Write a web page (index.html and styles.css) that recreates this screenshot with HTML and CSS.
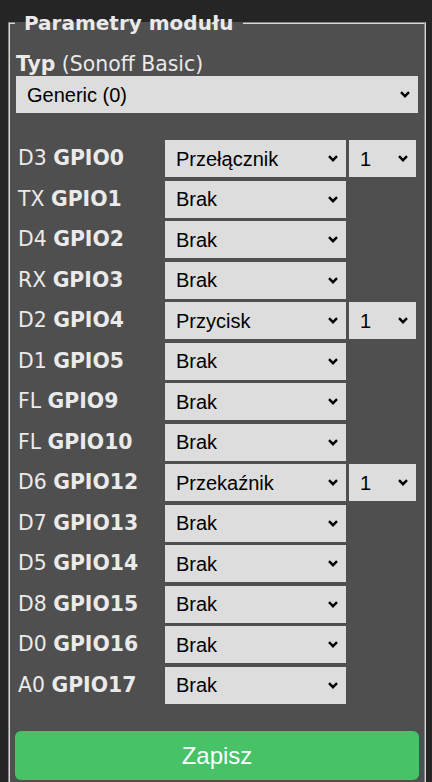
FILE: index.html
```html
<!DOCTYPE html>
<html lang="pl">
<head>
<meta charset="utf-8">
<title>Parametry modułu</title>
<link rel="stylesheet" href="styles.css">
</head>
<body>
<div class="page">
  <fieldset class="panel">
    <legend class="panel-title"><b>&nbsp;Parametry modułu&nbsp;</b></legend>
    <p class="type-label"><b>Typ</b> (Sonoff Basic)</p>
    <span class="sel sel-wide"><select class="field"><option>Generic (0)</option></select><svg class="chev" viewBox="0 0 10 7"><polyline points="1,1.2 5,5.2 9,1.2"/></svg></span>
    <div class="gpio-grid">
      <div class="gpio-label">D3 <b>GPIO0</b></div>
      <span class="sel"><select class="field"><option>Przełącznik</option></select><svg class="chev" viewBox="0 0 10 7"><polyline points="1,1.2 5,5.2 9,1.2"/></svg></span>
      <span class="sel"><select class="field"><option>1</option></select><svg class="chev" viewBox="0 0 10 7"><polyline points="1,1.2 5,5.2 9,1.2"/></svg></span>

      <div class="gpio-label">TX <b>GPIO1</b></div>
      <span class="sel"><select class="field"><option>Brak</option></select><svg class="chev" viewBox="0 0 10 7"><polyline points="1,1.2 5,5.2 9,1.2"/></svg></span>
      <span></span>

      <div class="gpio-label">D4 <b>GPIO2</b></div>
      <span class="sel"><select class="field"><option>Brak</option></select><svg class="chev" viewBox="0 0 10 7"><polyline points="1,1.2 5,5.2 9,1.2"/></svg></span>
      <span></span>

      <div class="gpio-label">RX <b>GPIO3</b></div>
      <span class="sel"><select class="field"><option>Brak</option></select><svg class="chev" viewBox="0 0 10 7"><polyline points="1,1.2 5,5.2 9,1.2"/></svg></span>
      <span></span>

      <div class="gpio-label">D2 <b>GPIO4</b></div>
      <span class="sel"><select class="field"><option>Przycisk</option></select><svg class="chev" viewBox="0 0 10 7"><polyline points="1,1.2 5,5.2 9,1.2"/></svg></span>
      <span class="sel"><select class="field"><option>1</option></select><svg class="chev" viewBox="0 0 10 7"><polyline points="1,1.2 5,5.2 9,1.2"/></svg></span>

      <div class="gpio-label">D1 <b>GPIO5</b></div>
      <span class="sel"><select class="field"><option>Brak</option></select><svg class="chev" viewBox="0 0 10 7"><polyline points="1,1.2 5,5.2 9,1.2"/></svg></span>
      <span></span>

      <div class="gpio-label">FL <b>GPIO9</b></div>
      <span class="sel"><select class="field"><option>Brak</option></select><svg class="chev" viewBox="0 0 10 7"><polyline points="1,1.2 5,5.2 9,1.2"/></svg></span>
      <span></span>

      <div class="gpio-label">FL <b>GPIO10</b></div>
      <span class="sel"><select class="field"><option>Brak</option></select><svg class="chev" viewBox="0 0 10 7"><polyline points="1,1.2 5,5.2 9,1.2"/></svg></span>
      <span></span>

      <div class="gpio-label">D6 <b>GPIO12</b></div>
      <span class="sel"><select class="field"><option>Przekaźnik</option></select><svg class="chev" viewBox="0 0 10 7"><polyline points="1,1.2 5,5.2 9,1.2"/></svg></span>
      <span class="sel"><select class="field"><option>1</option></select><svg class="chev" viewBox="0 0 10 7"><polyline points="1,1.2 5,5.2 9,1.2"/></svg></span>

      <div class="gpio-label">D7 <b>GPIO13</b></div>
      <span class="sel"><select class="field"><option>Brak</option></select><svg class="chev" viewBox="0 0 10 7"><polyline points="1,1.2 5,5.2 9,1.2"/></svg></span>
      <span></span>

      <div class="gpio-label">D5 <b>GPIO14</b></div>
      <span class="sel"><select class="field"><option>Brak</option></select><svg class="chev" viewBox="0 0 10 7"><polyline points="1,1.2 5,5.2 9,1.2"/></svg></span>
      <span></span>

      <div class="gpio-label">D8 <b>GPIO15</b></div>
      <span class="sel"><select class="field"><option>Brak</option></select><svg class="chev" viewBox="0 0 10 7"><polyline points="1,1.2 5,5.2 9,1.2"/></svg></span>
      <span></span>

      <div class="gpio-label">D0 <b>GPIO16</b></div>
      <span class="sel"><select class="field"><option>Brak</option></select><svg class="chev" viewBox="0 0 10 7"><polyline points="1,1.2 5,5.2 9,1.2"/></svg></span>
      <span></span>

      <div class="gpio-label">A0 <b>GPIO17</b></div>
      <span class="sel"><select class="field"><option>Brak</option></select><svg class="chev" viewBox="0 0 10 7"><polyline points="1,1.2 5,5.2 9,1.2"/></svg></span>
      <span></span>
    </div>
    <button class="save-btn" type="button">Zapisz</button>
  </fieldset>
</div>
</body>
</html>
```

FILE: styles.css
```css
html {
  font-size: 20px;
}

body {
  margin: 0;
  background: #252525;
  color: #eaeaea;
  font-family: "DejaVu Sans", Verdana, sans-serif;
  font-size: 20px;
}

.page {
  padding: 11px 6px 0 8px;
}

.panel {
  margin: 0;
  padding: 0 5px 8px 5px;
  background: #4f4f4f;
  border: 2px groove #d8d8d8;
  min-width: 0;
}

.panel-title {
  padding: 0 2px;
  line-height: 24px;
  font-size: 20px;
  color: #eaeaea;
}

.type-label {
  margin: 18px 0 0 1px;
  line-height: 23px;
  font-size: 20.4px;
}

.sel {
  position: relative;
  display: block;
}

.sel-wide {
  margin: 0 1px;
}

.field {
  display: block;
  width: 100%;
  height: 37px;
  margin: 0;
  padding: 0 24px 0 11px;
  border: 0;
  border-radius: 0;
  -webkit-appearance: none;
  appearance: none;
  background: #dddddd;
  color: #000000;
  font-family: "Liberation Sans", Arial, sans-serif;
  font-size: 20px;
}

.chev {
  position: absolute;
  right: 8px;
  top: 15px;
  width: 10px;
  height: 7px;
  pointer-events: none;
}

.chev polyline {
  fill: none;
  stroke: #000000;
  stroke-width: 2.4;
  stroke-linecap: butt;
  stroke-linejoin: miter;
}

.gpio-grid {
  display: grid;
  grid-template-columns: 147px 181px 67px;
  column-gap: 3px;
  row-gap: 3.54px;
  margin-top: 27px;
  align-items: center;
}

.gpio-label {
  padding-left: 3px;
  white-space: nowrap;
  line-height: 23px;
  font-size: 20.4px;
}

.save-btn {
  display: block;
  width: 100%;
  height: 49px;
  margin-top: 27px;
  border: 0;
  border-radius: 6px;
  background: #47c266;
  color: #faffff;
  font-family: "Liberation Sans", Arial, sans-serif;
  font-size: 24px;
  line-height: 49px;
  padding: 0;
}
```
